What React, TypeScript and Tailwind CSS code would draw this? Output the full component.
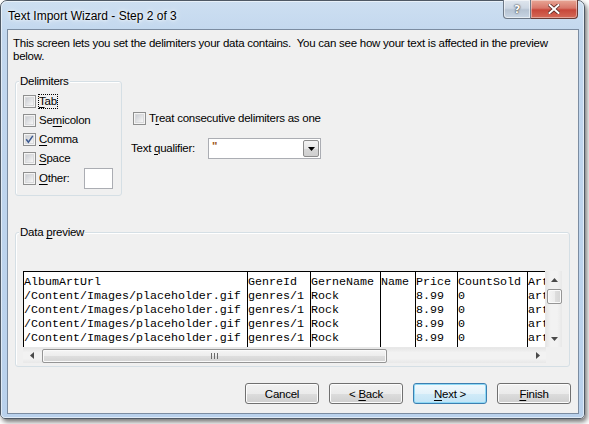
import React from "react";

const ui = "font-['Liberation_Sans',Arial,sans-serif] text-[11.5px] tracking-[-0.25px] text-black";

function U({ children }: { children: React.ReactNode }) {
  return <span className="underline underline-offset-[2px] decoration-[1px]">{children}</span>;
}

function Check({ checked = false }: { checked?: boolean }) {
  return (
    <span className="relative flex h-[13px] w-[13px] shrink-0 border border-[#8e8f8f] bg-[#f4f4f4] p-[1px]">
      <span className="flex-1 border border-[#d9dadc] bg-gradient-to-br from-[#cbced3] to-[#f7f7f7]" />
      {checked && (
        <svg className="absolute left-0 top-0" width="11" height="11" viewBox="0 0 11 11">
          <path d="M2.2 5.2 L4.4 8.2 L8.8 1.8" stroke="#3d5a91" strokeWidth="1.5" fill="none" />
        </svg>
      )}
    </span>
  );
}

function Group({
  label,
  className,
  children,
}: {
  label: React.ReactNode;
  className: string;
  children: React.ReactNode;
}) {
  return (
    <div
      className={
        "relative rounded-[3px] border border-[#d5dfe5] shadow-[inset_1px_1px_0_#fff] " + className
      }
    >
      <span className="absolute left-[3px] top-[-8px] bg-[#f0f0f0] px-[1px] leading-[14px]">
        {label}
      </span>
      {children}
    </div>
  );
}

function Button({
  children,
  focused = false,
}: {
  children: React.ReactNode;
  focused?: boolean;
}) {
  return (
    <div
      className={
        "flex h-[21px] w-[74px] items-center justify-center rounded-[3px] border " +
        (focused
          ? "border-[#3c7fb1] shadow-[inset_0_0_0_1px_#8fd9f5]"
          : "border-[#707070] shadow-[inset_0_0_0_1px_#fcfcfc]")
      }
      style={{
        background: focused
          ? "linear-gradient(#f1f9fd 0%, #e3f2fa 50%, #d1ebf8 51%, #c2e4f6 100%)"
          : "linear-gradient(#f2f2f2 0%, #ebebeb 50%, #dddddd 51%, #cfcfcf 100%)",
      }}
    >
      <span className="leading-[14px]">{children}</span>
    </div>
  );
}

const cols: { w: number; rows: string[] }[] = [
  { w: 224, rows: ["AlbumArtUrl", "/Content/Images/placeholder.gif", "/Content/Images/placeholder.gif", "/Content/Images/placeholder.gif", "/Content/Images/placeholder.gif"] },
  { w: 63, rows: ["GenreId", "genres/1", "genres/1", "genres/1", "genres/1"] },
  { w: 70, rows: ["GerneName", "Rock", "Rock", "Rock", "Rock"] },
  { w: 35, rows: ["Name", "", "", "", ""] },
  { w: 42, rows: ["Price", "8.99", "8.99", "8.99", "8.99"] },
  { w: 70, rows: ["CountSold", "0", "0", "0", "0"] },
  { w: 30, rows: ["Art", "art", "art", "art", "art"] },
];

function UpArrow() {
  return (
    <svg width="7" height="4" viewBox="0 0 7 4">
      <path d="M0 4 L3.5 0 L7 4 Z" fill="#4a4a4a" />
    </svg>
  );
}
function DownArrow() {
  return (
    <svg width="7" height="4" viewBox="0 0 7 4">
      <path d="M0 0 L3.5 4 L7 0 Z" fill="#4a4a4a" />
    </svg>
  );
}
function LeftArrow() {
  return (
    <svg width="4" height="7" viewBox="0 0 4 7">
      <path d="M4 0 L0 3.5 L4 7 Z" fill="#4a4a4a" />
    </svg>
  );
}
function RightArrow() {
  return (
    <svg width="4" height="7" viewBox="0 0 4 7">
      <path d="M0 0 L4 3.5 L0 7 Z" fill="#4a4a4a" />
    </svg>
  );
}

export default function App() {
  return (
    <div className={"h-[424px] w-[589px] overflow-hidden bg-white " + ui}>
      <div
        className="relative h-[419px] w-[585px] rounded-t-[7px] rounded-b-[5px] border border-[#4f5965] shadow-[2px_3px_5px_rgba(0,0,0,0.55)]"
        style={{ background: "linear-gradient(180deg, #cddff1 0%, #c2d7ee 8%, #b9d1ec 100%)" }}
      >
        <div className="pointer-events-none absolute inset-0 rounded-t-[6px] rounded-b-[4px] shadow-[inset_0_0_0_1px_rgba(255,255,255,0.55)]" />
        {/* title bar */}
        <div className="flex h-[28px] items-center pl-[7px] pt-[2px]">
          <span className="text-[12px] leading-[14px] tracking-normal [text-shadow:0_0_6px_#fff,0_0_3px_#fff]">
            Text Import Wizard - Step 2 of 3
          </span>
        </div>
        {/* caption buttons */}
        <div className="absolute right-[6px] top-[-1px] flex h-[19px]">
          <div
            className="flex w-[28px] items-center justify-center rounded-bl-[4px] border border-t-0 border-[#6d7886] shadow-[inset_0_0_0_1px_rgba(255,255,255,0.55)]"
            style={{ background: "linear-gradient(#dfe6ee 0%, #cdd7e3 45%, #b6c3d2 55%, #c9d6e4 100%)" }}
          >
            <span className="font-['DejaVu_Sans',sans-serif] text-[11px] font-bold leading-[11px] text-white [text-shadow:0_0_1px_#333,0_0_2px_#333]">
              ?
            </span>
          </div>
          <div
            className="flex w-[47px] items-center justify-center rounded-br-[4px] border border-l-0 border-t-0 border-[#6a3a34] shadow-[inset_0_0_0_1px_rgba(255,255,255,0.4)]"
            style={{ background: "linear-gradient(#e8a796 0%, #d8776a 45%, #c7473a 55%, #d46a58 100%)" }}
          >
            <svg width="12" height="10" viewBox="0 0 12 10">
              <path d="M1.5 1 L10.5 9 M10.5 1 L1.5 9" stroke="#5a2a24" strokeWidth="3.6" strokeLinecap="square" />
              <path d="M1.5 1 L10.5 9 M10.5 1 L1.5 9" stroke="#ffffff" strokeWidth="2" strokeLinecap="square" />
            </svg>
          </div>
        </div>

        {/* client area */}
        <div className="ml-[6px] h-[385px] w-[572px] border border-[#7b8ca1] bg-[#f0f0f0]">
          <div className="whitespace-nowrap pl-[5px] pt-[7px] leading-[13px]">
            This screen lets you set the delimiters your data contains.&nbsp; You can see how your text is affected in the preview
            <br />
            below.
          </div>

          <div className="mt-[18px] flex pl-[7px]">
            <Group label="Delimiters" className="h-[115px] w-[107px]">
              <div className="flex flex-col pl-[7px] pt-[10px]">
                <div className="flex h-[19px] items-center">
                  <Check />
                  <span className="ml-[3px] outline outline-1 outline-dotted outline-black leading-[13px]">
                    <U>T</U>ab
                  </span>
                </div>
                <div className="flex h-[19px] items-center">
                  <Check />
                  <span className="ml-[3px]">
                    Se<U>m</U>icolon
                  </span>
                </div>
                <div className="flex h-[19px] items-center">
                  <Check checked />
                  <span className="ml-[3px]">
                    <U>C</U>omma
                  </span>
                </div>
                <div className="flex h-[19px] items-center">
                  <Check />
                  <span className="ml-[3px]">
                    <U>S</U>pace
                  </span>
                </div>
                <div className="flex h-[21px] items-center">
                  <Check />
                  <span className="ml-[3px] w-[45px]">
                    <U>O</U>ther:
                  </span>
                  <div className="h-[21px] w-[29px] border border-[#abadb3] bg-white" />
                </div>
              </div>
            </Group>

            <div className="ml-[9px] flex flex-col pt-[28px]">
              <div className="flex h-[19px] items-center pl-[2px]">
                <Check />
                <span className="ml-[3px]">
                  T<U>r</U>eat consecutive delimiters as one
                </span>
              </div>
              <div className="mt-[10px] flex h-[21px] items-center">
                <span className="w-[77px]">
                  Text <U>q</U>ualifier:
                </span>
                <div className="flex h-[21px] w-[113px] items-center border border-[#abadb3] bg-white">
                  <span className="ml-[3px] flex-1 self-start pt-[1px] font-bold leading-[12px] text-[#a05a1e]">"</span>
                  <div
                    className="mr-[1px] flex h-[17px] w-[16px] items-center justify-center rounded-[2px] border border-[#8c8c8c]"
                    style={{ background: "linear-gradient(#f3f3f3 0%, #e6e6e6 50%, #d7d7d7 51%, #cfcfcf 100%)" }}
                  >
                    <svg width="7" height="4" viewBox="0 0 7 4">
                      <path d="M0 0 L7 0 L3.5 4 Z" fill="#000" />
                    </svg>
                  </div>
                </div>
              </div>
            </div>
          </div>

          <div className="mt-[36px] pl-[7px]">
            <Group
              label={
                <>
                  Data <U>p</U>review
                </>
              }
              className="h-[135px] w-[555px]"
            >
              <div className="pl-[7px] pt-[38px]">
                <div className="flex w-[540px] flex-col">
                  <div className="flex h-[76px]">
                    {/* table */}
                    <div className="flex h-[76px] w-[522px] overflow-hidden border-t border-black bg-white font-['Liberation_Mono','Courier_New',monospace] text-[11.67px] leading-[14px] tracking-normal">
                      {cols.map((c, i) => (
                        <div
                          key={i}
                          className="shrink-0 whitespace-pre border-l border-black pt-[3px]"
                          style={{ width: c.w }}
                        >
                          {c.rows.map((r, j) => (
                            <div key={j} className="h-[14px]">
                              {r}
                            </div>
                          ))}
                        </div>
                      ))}
                    </div>
                    {/* vertical scrollbar */}
                    <div
                      className="flex w-[17px] flex-col items-center border-l border-[#e8e8e8]"
                      style={{ background: "linear-gradient(90deg, #e6e6e6 0%, #f2f2f2 30%, #f2f2f2 70%, #e8e8e8 100%)" }}
                    >
                      <div className="flex h-[17px] items-center justify-center">
                        <UpArrow />
                      </div>
                      <div
                        className="mt-[1px] h-[15px] w-[15px] rounded-[2px] border border-[#959595] shadow-[inset_0_0_0_1px_#fafafa]"
                        style={{ background: "linear-gradient(90deg, #f5f5f5 0%, #ececec 50%, #dedede 51%, #d4d4d4 100%)" }}
                      />
                      <div className="flex-1" />
                      <div className="flex h-[17px] items-center justify-center">
                        <DownArrow />
                      </div>
                    </div>
                  </div>
                  <div className="flex h-[16px]">
                    {/* horizontal scrollbar */}
                    <div
                      className="flex h-[16px] w-[523px] items-center border-t border-[#e8e8e8]"
                      style={{ background: "linear-gradient(#e6e6e6 0%, #f2f2f2 30%, #f2f2f2 70%, #e8e8e8 100%)" }}
                    >
                      <div className="flex w-[17px] items-center justify-center">
                        <LeftArrow />
                      </div>
                      <div
                        className="ml-[2px] flex h-[14px] w-[345px] items-center justify-center rounded-[2px] border border-[#959595] shadow-[inset_0_0_0_1px_#fafafa]"
                        style={{ background: "linear-gradient(#f5f5f5 0%, #ececec 50%, #dedede 51%, #d4d4d4 100%)" }}
                      >
                        <div className="flex gap-[2px]">
                          <span className="h-[6px] w-[1px] bg-[#6b6b6b]" />
                          <span className="h-[6px] w-[1px] bg-[#6b6b6b]" />
                          <span className="h-[6px] w-[1px] bg-[#6b6b6b]" />
                        </div>
                      </div>
                      <div className="flex-1" />
                      <div className="flex w-[17px] items-center justify-center">
                        <RightArrow />
                      </div>
                    </div>
                    <div className="w-[17px] bg-[#f0f0f0]" />
                  </div>
                </div>
              </div>
            </Group>
          </div>

          <div className="mt-[16px] flex justify-end gap-[10px] pr-[7px]">
            <Button>Cancel</Button>
            <Button>
              &lt; <U>B</U>ack
            </Button>
            <Button focused>
              <U>N</U>ext &gt;
            </Button>
            <Button>
              <U>F</U>inish
            </Button>
          </div>
        </div>
      </div>
    </div>
  );
}
